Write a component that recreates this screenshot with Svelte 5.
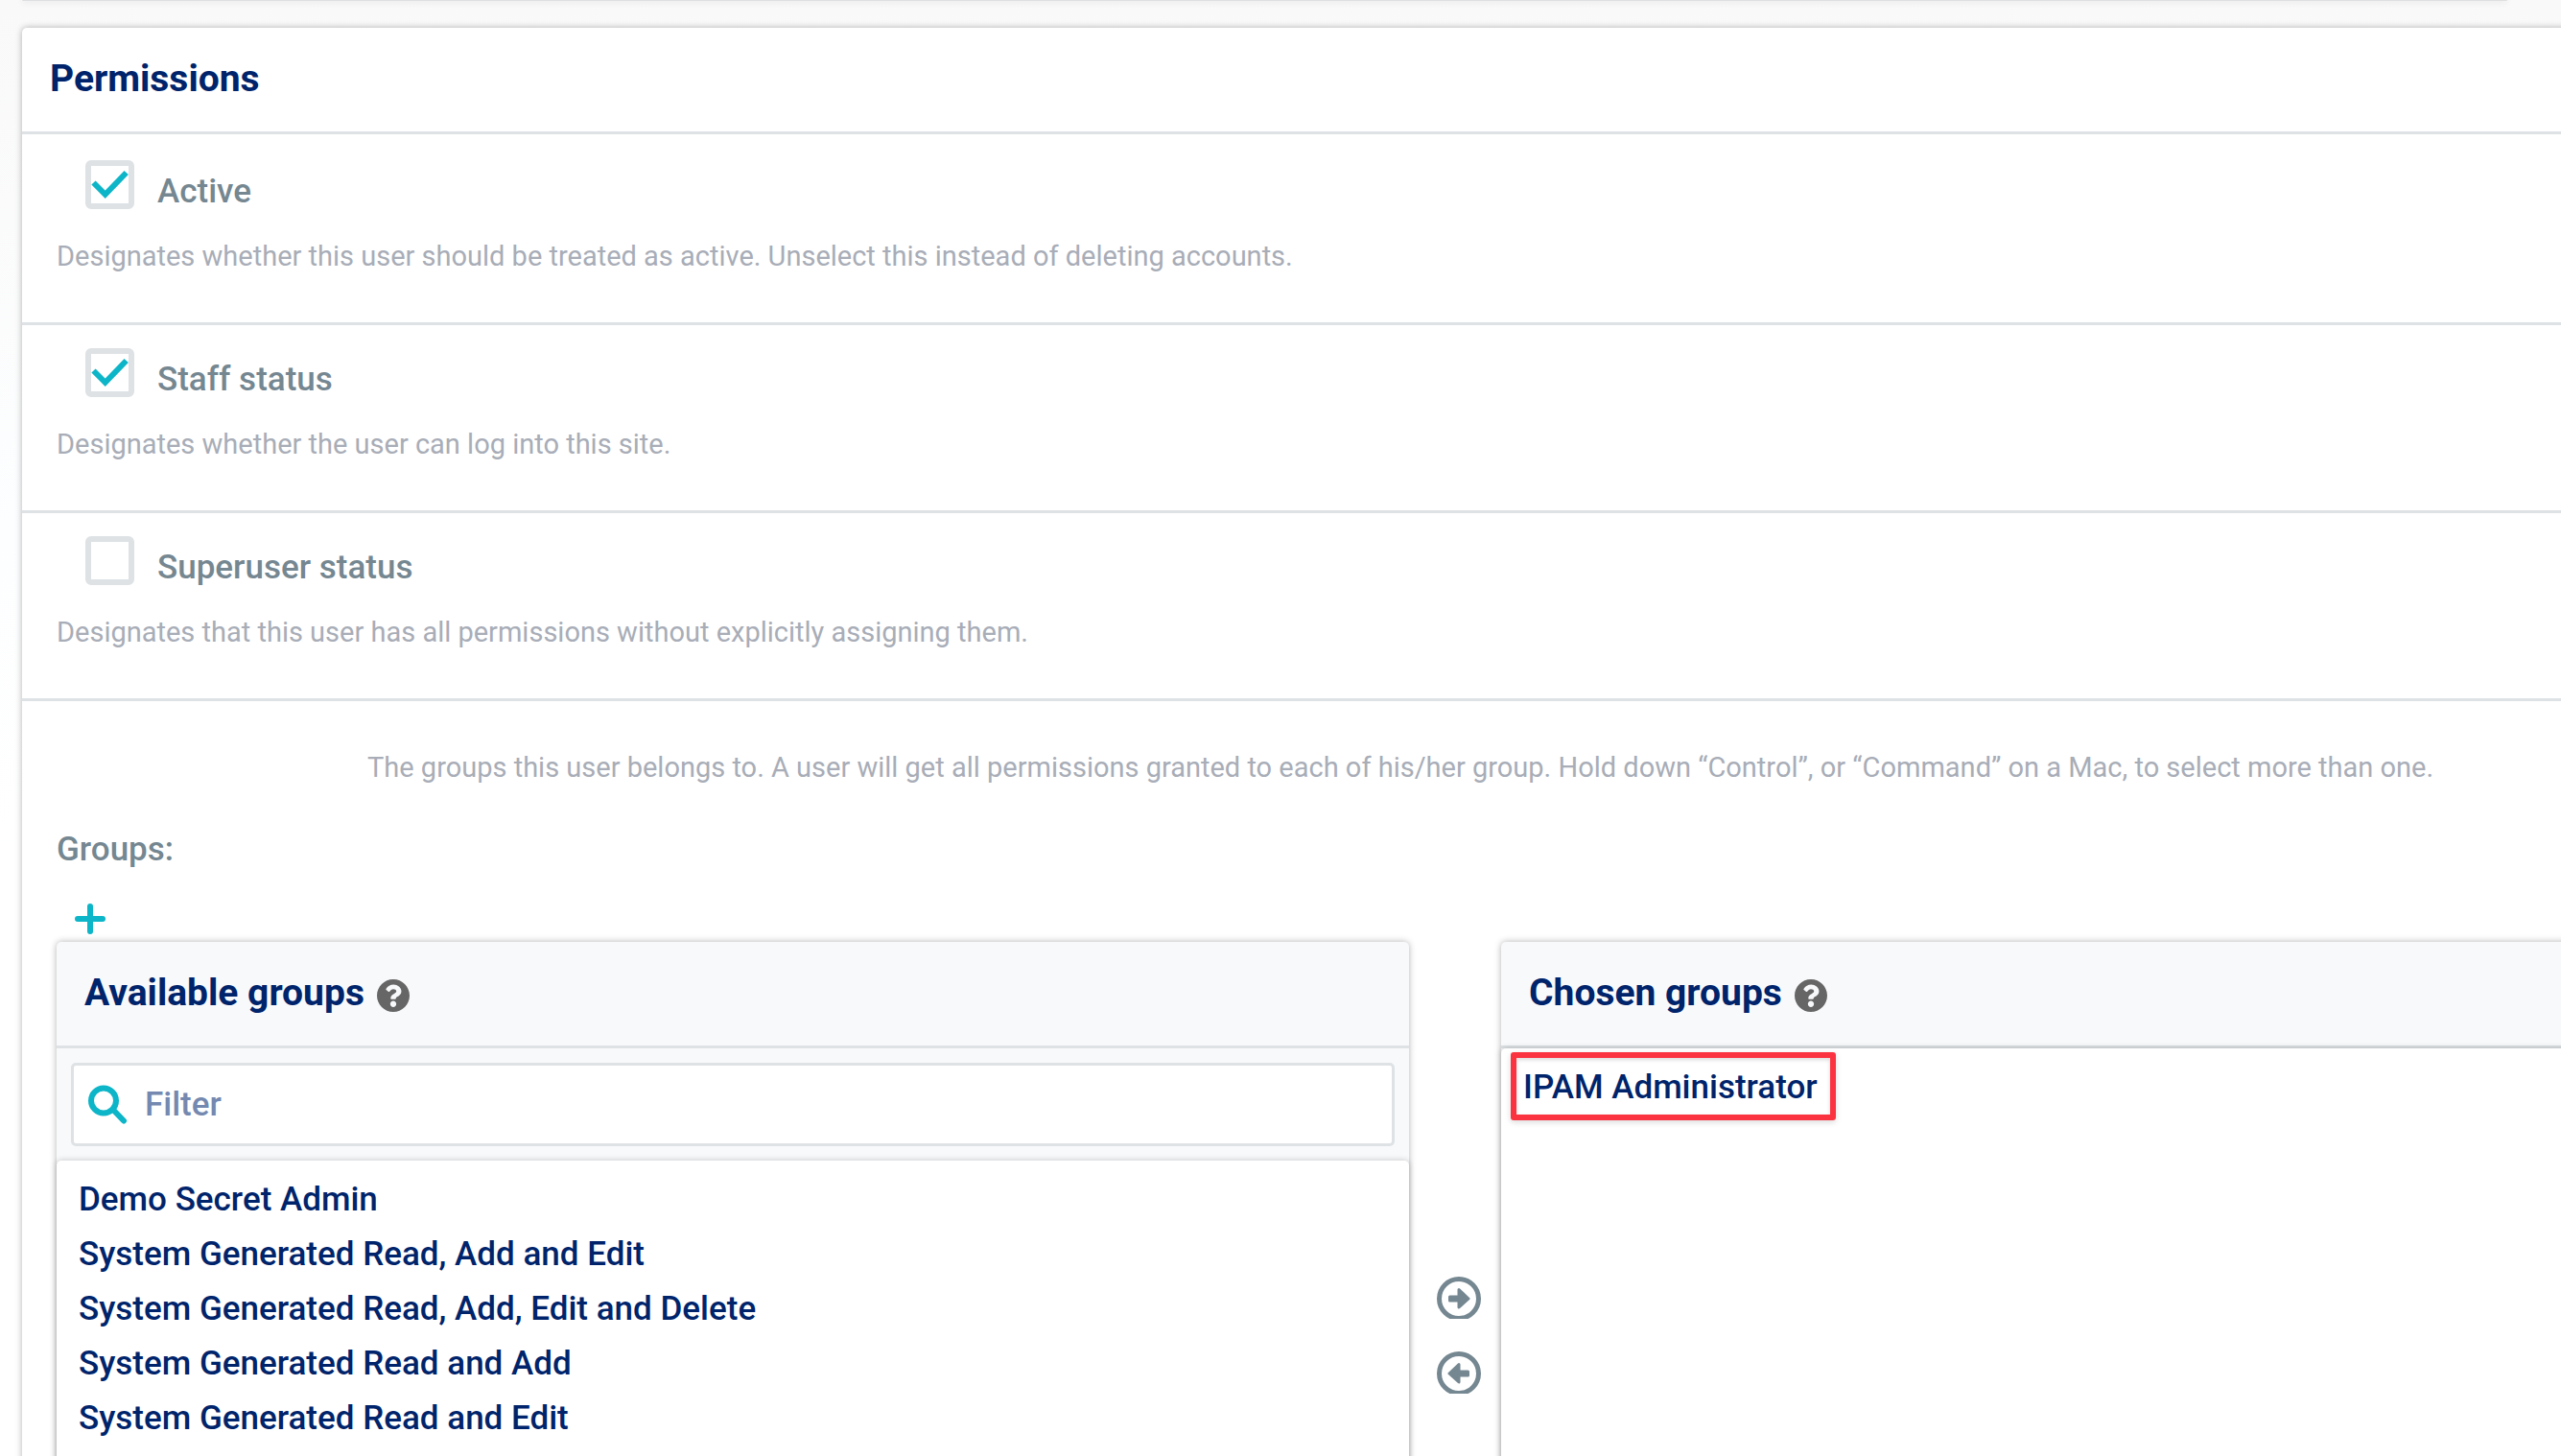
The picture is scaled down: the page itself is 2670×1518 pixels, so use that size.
<script>
  let flags = $state([
    {
      id: 'is_active',
      label: 'Active',
      checked: true,
      help: 'Designates whether this user should be treated as active. Unselect this instead of deleting accounts.'
    },
    {
      id: 'is_staff',
      label: 'Staff status',
      checked: true,
      help: 'Designates whether the user can log into this site.'
    },
    {
      id: 'is_superuser',
      label: 'Superuser status',
      checked: false,
      help: 'Designates that this user has all permissions without explicitly assigning them.'
    }
  ]);

  const available = [
    'Demo Secret Admin',
    'System Generated Read, Add and Edit',
    'System Generated Read, Add, Edit and Delete',
    'System Generated Read and Add',
    'System Generated Read and Edit'
  ];
  const chosen = ['IPAM Administrator'];

  let filter = $state('');
  let visible = $derived(available.filter((g) => g.toLowerCase().includes(filter.toLowerCase())));
</script>

{#snippet helpIcon()}
  <svg class="help-icon" viewBox="8 8 496 496" aria-hidden="true">
    <path
      d="M504 256c0 137-111 248-248 248S8 393 8 256 119 8 256 8s248 111 248 248zM262.700 90c-54.500 0-89.300 23-116.500 63.800-3.500 5.300-2.400 12.400 2.700 16.300l34.700 26.300c5.200 3.900 12.600 3 16.700-2.100 17.900-22.700 30.100-35.800 57.300-35.800 20.400 0 45.700 13.100 45.700 33 0 15-12.400 22.700-32.500 34C247.100 238.500 216 254.900 216 296v4c0 6.600 5.400 12 12 12h56c6.600 0 12-5.400 12-12v-1.300c0-28.500 83.200-29.600 83.200-106.700 0-58-60.200-102-116.500-102zM256 338c-25.400 0-46 20.600-46 46s20.600 46 46 46 46-20.600 46-46-20.600-46-46-46z"
    />
  </svg>
{/snippet}

<main class="page">
  <div class="previous card"></div>

  <section class="fieldset card">
    <h2 class="title">Permissions</h2>

    <div class="rows">
      {#each flags as flag (flag.id)}
        <div class="row">
          <div class="check-line">
            <span class="box">
              <input type="checkbox" id={flag.id} bind:checked={flag.checked} />
              <svg class="tick" viewBox="0 0 51 51" aria-hidden="true">
                <path d="M8.500 23.500 20.700 35.800 42.700 13" />
              </svg>
            </span>
            <label for={flag.id}>{flag.label}</label>
          </div>
          <p class="help">{flag.help}</p>
        </div>
      {/each}

      <div class="groups">
        <p class="help groups-help">
          The groups this user belongs to. A user will get all permissions granted to each of his/her group. Hold
          down “Control”, or “Command” on a Mac, to select more than one.
        </p>
        <label class="groups-label" for="available">Groups:</label>
        <button class="add" type="button" aria-label="Add group">
          <svg viewBox="0 0 32 32" aria-hidden="true"><path d="M16 3V29M3 16H29" /></svg>
        </button>

        <div class="selector">
          <div class="panel card">
            <h2 class="title">Available groups {@render helpIcon()}</h2>
            <div class="filter">
              <svg class="search" viewBox="0 0 41 41" aria-hidden="true">
                <circle cx="16" cy="16.500" r="13" />
                <path d="M26 26 37 37.500" />
              </svg>
              <input type="text" placeholder="Filter" aria-label="Filter available groups" bind:value={filter} />
            </div>
            <select id="available" class="card" multiple size="10">
              {#each visible as group}
                <option>{group}</option>
              {/each}
            </select>
          </div>

          <div class="movers">
            <button type="button" aria-label="Choose">
              <svg viewBox="0 0 46 44" aria-hidden="true">
                <circle cx="23" cy="23" r="20.500" />
                <path d="M13.500 21H23V13.500L33 23 23 32V25H13.500Z" />
              </svg>
            </button>
            <button type="button" aria-label="Remove">
              <svg viewBox="0 0 46 44" aria-hidden="true">
                <circle cx="23" cy="23" r="20.500" />
                <path d="M32.500 21H23V13.500L13 23 23 32V25H32.500Z" />
              </svg>
            </button>
          </div>

          <div class="panel card">
            <h2 class="title">Chosen groups {@render helpIcon()}</h2>
            <div class="chosen">
              <select class="card" multiple size="10" aria-label="Chosen groups">
                {#each chosen as group}
                  <option>{group}</option>
                {/each}
              </select>
              <span class="highlight"></span>
            </div>
          </div>
        </div>
      </div>
    </div>
  </section>
</main>

<style>
  :global(body) {
    margin: 0;
  }

  .page {
    --navy: #00246b;
    --slate: #758791;
    --teal: #0cb5c7;
    --line: #dee2e5;
    height: 100vh;
    overflow: hidden;
    padding-left: 23px;
    box-sizing: border-box;
    background: linear-gradient(#f9f9f9, #fdfeff 560px, #ffffff 900px);
    font-family: Roboto, 'Liberation Sans', sans-serif;
    font-size: 35px;
    font-weight: 500;
    color: var(--slate);
  }

  .card {
    border-radius: 5px;
    background: #ffffff;
    box-shadow: 0 0 7px rgba(0, 0, 0, 0.3);
  }

  .previous {
    height: 1px;
    margin: 0 56px 28px 0;
    border-radius: 0 0 5px 5px;
    background: #dedfe0;
  }

  /* The form is wider than the window and runs off its right edge. */
  .fieldset {
    width: 113%;
  }

  .title {
    display: flex;
    align-items: center;
    gap: 13px;
    height: 106px;
    margin: 0;
    padding: 0 29px 2px;
    border-bottom: 3px solid var(--line);
    font-size: 39px;
    font-weight: 700;
    color: var(--navy);
  }

  .help-icon {
    width: 34px;
    height: 34px;
    margin-top: 6px;
    fill: #666666;
  }

  .rows {
    padding-top: 3px;
  }

  .row {
    padding: 24px 36px 49px;
    border-bottom: 3px solid var(--line);
  }

  .check-line {
    display: flex;
    gap: 24px;
    padding-left: 30px;
    line-height: 66px;
  }

  .box {
    position: relative;
    width: 51px;
    height: 51px;
  }

  .box input {
    appearance: none;
    display: block;
    box-sizing: border-box;
    width: 51px;
    height: 51px;
    margin: 0;
    border: 6px solid var(--line);
    border-radius: 6px;
    background: #ffffff;
  }

  .tick {
    position: absolute;
    inset: 0;
    visibility: hidden;
    pointer-events: none;
    fill: none;
    stroke: var(--teal);
    stroke-width: 6;
  }

  input:checked + .tick {
    visibility: visible;
  }

  .help {
    margin: 14px 0 0;
    font-size: 29px;
    font-weight: 400;
    line-height: 40px;
    color: #a8adb7;
  }

  .groups {
    display: flex;
    flex-direction: column;
    align-items: flex-start;
    padding: 49px 39px 0 36px;
  }

  .groups-help {
    margin: 0 0 42px 324px;
  }

  .groups-label {
    line-height: 48px;
  }

  button {
    display: block;
    padding: 0;
    border: 0;
    background: none;
  }

  button svg {
    display: block;
  }

  .add {
    margin: 32px 0 8px 19px;
  }

  .add svg {
    width: 32px;
    height: 32px;
    stroke: var(--teal);
    stroke-width: 6;
    stroke-linecap: round;
  }

  .selector {
    display: grid;
    grid-template-columns: 1fr 96px 1fr;
    align-self: stretch;
  }

  .panel {
    background: #f8f9fb;
  }

  .filter {
    display: flex;
    align-items: center;
    position: relative;
    padding: 15px;
  }

  .filter input {
    box-sizing: border-box;
    width: 100%;
    height: 87px;
    padding: 0 20px 0 74px;
    border: 3px solid var(--line);
    border-radius: 5px;
    background: #ffffff;
    font: inherit;
    color: var(--navy);
  }

  .filter input::placeholder {
    color: #7589b0;
    opacity: 1;
  }

  .search {
    position: absolute;
    left: 33px;
    width: 41px;
    height: 41px;
    fill: none;
    stroke: var(--teal);
    stroke-width: 6;
    stroke-linecap: round;
  }

  select {
    display: block;
    box-sizing: border-box;
    width: 100%;
    height: 600px;
    padding: 12px 0;
    border: 0;
    outline: 0;
    font: inherit;
    color: var(--navy);
  }

  select.card {
    box-shadow: 0 0 6px rgba(0, 0, 0, 0.22);
  }

  option {
    box-sizing: border-box;
    height: 57px;
    padding: 8px 23px;
    font-weight: 500;
    line-height: 41px;
  }

  .movers {
    display: flex;
    flex-direction: column;
    align-items: center;
    gap: 34px;
    padding: 349px 0 0 8px;
  }

  .movers svg {
    width: 46px;
    height: 44px;
  }

  .movers circle {
    fill: none;
    stroke: var(--slate);
    stroke-width: 5;
  }

  .movers path {
    fill: var(--slate);
    stroke: var(--slate);
    stroke-width: 3;
    stroke-linejoin: round;
  }

  .chosen {
    position: relative;
  }

  /* Frame that calls out the selected group, over the list. */
  .highlight {
    position: absolute;
    top: 4px;
    left: 10px;
    box-sizing: border-box;
    width: 339px;
    height: 71px;
    border: 6px solid #fb3340;
    border-radius: 3px;
    box-shadow:
      0 2px 6px rgba(0, 0, 0, 0.15),
      inset 0 2px 4px rgba(0, 0, 0, 0.15);
    pointer-events: none;
  }
</style>
